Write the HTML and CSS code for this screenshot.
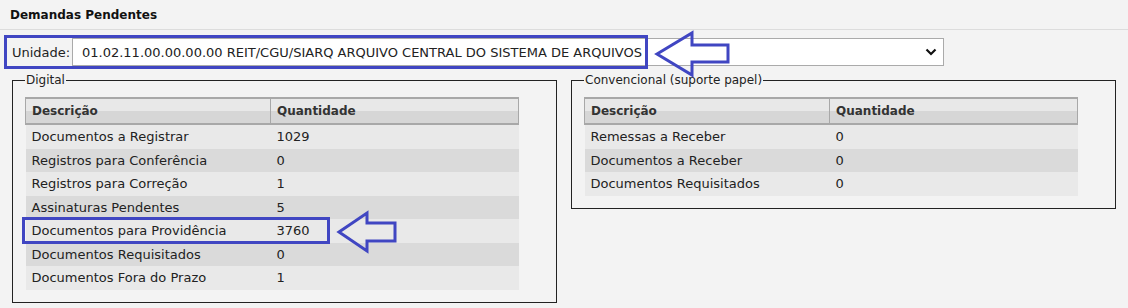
FILE: index.html
```html
<!DOCTYPE html>
<html>
<head>
    <meta charset="UTF-8">
    <title>Demandas Pendentes</title>
    <link rel="stylesheet" href="styles.css">
</head>
<body>
    <div class="page-header">
        <h1>Demandas Pendentes</h1>
    </div>

    <div class="unit-row">
        <label class="unit-label">Unidade:</label>
        <div class="unit-select">
            <span>01.02.11.00.00.00.00 REIT/CGU/SIARQ ARQUIVO CENTRAL DO SISTEMA DE ARQUIVOS</span>
            <svg class="chevron" width="12" height="8" viewBox="0 0 12 8">
                <polyline points="1.5,1.5 6,6 10.5,1.5" fill="none" stroke="#111" stroke-width="2.2"/>
            </svg>
        </div>
    </div>

    <div class="panels">
        <fieldset class="panel panel-digital">
            <legend>Digital</legend>
            <table class="demand-table">
                <thead>
                    <tr><th>Descrição</th><th>Quantidade</th></tr>
                </thead>
                <tbody>
                    <tr><td>Documentos a Registrar</td><td>1029</td></tr>
                    <tr><td>Registros para Conferência</td><td>0</td></tr>
                    <tr><td>Registros para Correção</td><td>1</td></tr>
                    <tr><td>Assinaturas Pendentes</td><td>5</td></tr>
                    <tr><td>Documentos para Providência</td><td>3760</td></tr>
                    <tr><td>Documentos Requisitados</td><td>0</td></tr>
                    <tr><td>Documentos Fora do Prazo</td><td>1</td></tr>
                </tbody>
            </table>
        </fieldset>

        <fieldset class="panel panel-paper">
            <legend>Convencional (suporte papel)</legend>
            <table class="demand-table">
                <thead>
                    <tr><th>Descrição</th><th>Quantidade</th></tr>
                </thead>
                <tbody>
                    <tr><td>Remessas a Receber</td><td>0</td></tr>
                    <tr><td>Documentos a Receber</td><td>0</td></tr>
                    <tr><td>Documentos Requisitados</td><td>0</td></tr>
                </tbody>
            </table>
        </fieldset>
    </div>

    <!-- annotation overlays -->
    <div class="mark mark-unit"></div>
    <svg class="arrow arrow-unit" width="77" height="48" viewBox="0 0 77 48">
        <polygon points="3,24 38,3 38,15 74,15 74,32 38,32 38,45" fill="none" stroke="#4046c2" stroke-width="3" stroke-linejoin="miter"/>
    </svg>

    <div class="mark mark-row"></div>
    <svg class="arrow arrow-row" width="62" height="44" viewBox="0 0 62 44">
        <polygon points="3,22 31,3 31,13 59,13 59,31 31,31 31,41" fill="none" stroke="#4046c2" stroke-width="3" stroke-linejoin="miter"/>
    </svg>
</body>
</html>
```

FILE: styles.css
```css
body {
    margin: 0;
    position: relative;
    height: 308px;
    background-color: #f3f3f3;
    font-family: "DejaVu Sans", Verdana, sans-serif;
    font-size: 12px;
    color: #222;
}

.page-header {
    height: 30px;
    padding: 0 10px;
    border-bottom: 1px solid #dcdcdc;
    display: flex;
    align-items: center;
    box-sizing: border-box;
}

.page-header h1 {
    margin: 0;
    font-size: 12px;
    font-weight: bold;
    color: #111;
}

.unit-row {
    display: flex;
    align-items: center;
    gap: 3px;
    padding: 8px 0 0 12px;
}

.unit-label {
    width: 57px;
    font-size: 13px;
    color: #222;
}

.unit-select {
    width: 872px;
    height: 28px;
    box-sizing: border-box;
    border: 1px solid #aaa;
    background-color: #fff;
    display: flex;
    align-items: center;
    justify-content: space-between;
    padding: 0 6px 0 9px;
    font-size: 13px;
    color: #222;
}

.panels {
    display: flex;
    align-items: flex-start;
    gap: 14px;
    padding: 7px 12px 0 12px;
}

.panel {
    width: 545px;
    box-sizing: border-box;
    margin: 0;
    border: 1px solid #222;
    padding: 10px 12px 12px 12px;
}

.panel legend {
    padding: 0 1px;
    font-size: 12px;
    color: #222;
}

.demand-table {
    width: 494px;
    border-collapse: collapse;
}

.demand-table th {
    text-align: left;
    font-weight: bold;
    color: #333;
    height: 24px;
    padding: 0 6px;
    background: linear-gradient(#e8e8e8 50%, #d6d6d6 50%);
    border: 2px solid #a8a8a8;
    border-left-width: 1px;
    border-right-width: 1px;
}

.demand-table th:first-child {
    width: 232px;
}

.demand-table td {
    height: 23.5px;
    padding: 0 6px;
    font-size: 13px;
}

.demand-table tbody tr:nth-child(odd) {
    background-color: #e9e9e9;
}

.demand-table tbody tr:nth-child(even) {
    background-color: #dadada;
}

.mark {
    position: absolute;
    border: 3px solid #4046c2;
    box-sizing: border-box;
}

.mark-unit {
    left: 4px;
    top: 35px;
    width: 644px;
    height: 34px;
}

.mark-row {
    left: 22px;
    top: 217px;
    width: 308px;
    height: 27px;
}

.arrow {
    position: absolute;
}

.arrow-unit {
    left: 654px;
    top: 30px;
}

.arrow-row {
    left: 336px;
    top: 210px;
}
```
